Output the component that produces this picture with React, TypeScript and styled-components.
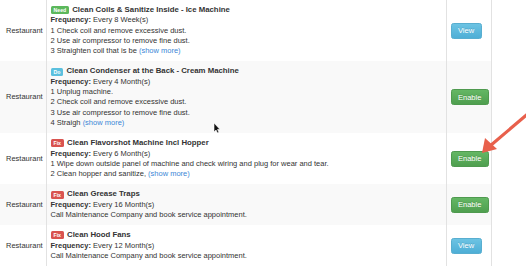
import React from "react";
import styled, { createGlobalStyle } from "styled-components";

const Global = createGlobalStyle`
  html, body { margin: 0; padding: 0; background: #fff; }
  body { font-family: "Liberation Sans", Arial, sans-serif; color: #333; overflow: hidden; }
`;

const Page = styled.div`
  position: relative;
  width: 526px;
  height: 268px;
  overflow: hidden;
`;

const Table = styled.table`
  border-collapse: collapse;
  width: 491px;
  table-layout: fixed;
  font-size: 7.5px;
  line-height: 10.3px;
`;

const Row = styled.tr<{ $alt?: boolean }>`
  background: ${(p) => (p.$alt ? "#f9f9f9" : "#fff")};
  & + & > td { border-top: 1px solid #e2e2e2; }
`;

const LocCell = styled.td`
  width: 46px;
  padding: 0 0 0 6px;
  vertical-align: middle;
  box-sizing: border-box;
`;

const MainCell = styled.td`
  width: 400px;
  box-sizing: border-box;
  padding: 5px 4px 5px 4px;
  border-left: 1px solid #e2e2e2;
  vertical-align: top;
  white-space: nowrap;
  overflow: hidden;
`;

const ActionCell = styled.td`
  width: 45px;
  box-sizing: border-box;
  padding: 0 0 0 4px;
  border-left: 1px solid #e2e2e2;
  border-right: 1px solid #e2e2e2;
  vertical-align: middle;
`;

const Title = styled.div`
  display: flex;
  align-items: center;
  gap: 3px;
  font-weight: bold;
  font-size: 7.8px;
  color: #333;
`;

const badgeColors: Record<string, string> = {
  Need: "#5cb85c",
  Do: "#5bc0de",
  Fix: "#d9534f",
};

const Badge = styled.span<{ $kind: string }>`
  display: inline-block;
  background: ${(p) => badgeColors[p.$kind]};
  color: #fff;
  font-size: 5.2px;
  font-weight: bold;
  line-height: 8px;
  height: 8px;
  padding: 0 3px;
  border-radius: 1.5px;
`;

const Line = styled.div``;

const Strong = styled.b`
  font-weight: bold;
`;

const More = styled.a`
  color: #3a87d6;
  text-decoration: none;
`;

const Button = styled.button<{ $variant: "info" | "success" }>`
  font-family: "Liberation Sans", Arial, sans-serif;
  font-size: 7.5px;
  color: #fff;
  height: 16px;
  padding: 0 6.5px;
  border-radius: 2.5px;
  border: 1px solid ${(p) => (p.$variant === "info" ? "#58aed0" : "#4f9a4f")};
  background: ${(p) =>
    p.$variant === "info"
      ? "linear-gradient(#6cc3e3, #4eaed6)"
      : "linear-gradient(#64b764, #4f9f4f)"};
  text-shadow: 0 -1px 0 rgba(0, 0, 0, 0.15);
  cursor: pointer;
`;

const Overlay = styled.svg`
  position: absolute;
  left: 0;
  top: 0;
  pointer-events: none;
`;

type Item = {
  badge: string;
  title: string;
  freq: string;
  lines: string[];
  more?: boolean;
  action: "View" | "Enable";
};

const items: Item[] = [
  {
    badge: "Need",
    title: "Clean Coils & Sanitize Inside - Ice Machine",
    freq: "Every 8 Week(s)",
    lines: [
      "1 Check coil and remove excessive dust.",
      "2 Use air compressor to remove fine dust.",
      "3 Straighten coil that is be",
    ],
    more: true,
    action: "View",
  },
  {
    badge: "Do",
    title: "Clean Condenser at the Back - Cream Machine",
    freq: "Every 4 Month(s)",
    lines: [
      "1 Unplug machine.",
      "2 Check coil and remove excessive dust.",
      "3 Use air compressor to remove fine dust.",
      "4 Straigh",
    ],
    more: true,
    action: "Enable",
  },
  {
    badge: "Fix",
    title: "Clean Flavorshot Machine Incl Hopper",
    freq: "Every 6 Month(s)",
    lines: [
      "1 Wipe down outside panel of machine and check wiring and plug for wear and tear.",
      "2 Clean hopper and sanitize,",
    ],
    more: true,
    action: "Enable",
  },
  {
    badge: "Fix",
    title: "Clean Grease Traps",
    freq: "Every 16 Month(s)",
    lines: ["Call Maintenance Company and book service appointment."],
    action: "Enable",
  },
  {
    badge: "Fix",
    title: "Clean Hood Fans",
    freq: "Every 12 Month(s)",
    lines: ["Call Maintenance Company and book service appointment."],
    action: "View",
  },
];

export default function App() {
  return (
    <Page>
      <Global />
      <Table>
        <tbody>
          {items.map((it, i) => (
            <Row key={i} $alt={i % 2 === 1}>
              <LocCell>Restaurant</LocCell>
              <MainCell>
                <Title>
                  <Badge $kind={it.badge}>{it.badge}</Badge>
                  <span>{it.title}</span>
                </Title>
                <Line>
                  <Strong>Frequency:</Strong> {it.freq}
                </Line>
                {it.lines.map((l, j) => (
                  <Line key={j}>
                    {l}
                    {it.more && j === it.lines.length - 1 ? (
                      <>
                        {" "}
                        <More>(show more)</More>
                      </>
                    ) : null}
                  </Line>
                ))}
              </MainCell>
              <ActionCell>
                <Button $variant={it.action === "View" ? "info" : "success"}>
                  {it.action}
                </Button>
              </ActionCell>
            </Row>
          ))}
        </tbody>
      </Table>
      <Overlay width="526" height="268" viewBox="0 0 526 268">
        <line x1="530" y1="112" x2="490" y2="146" stroke="#e8604c" strokeWidth="3.2" strokeLinecap="round" />
        <polygon points="482,153 485,138 497,149" fill="#e8604c" />
        <path
          d="M214 123 L214 132 L216 130 L217.5 133 L219 132.3 L217.5 129.5 L220 129.5 Z"
          fill="#111"
          stroke="#fff"
          strokeWidth="0.6"
        />
      </Overlay>
    </Page>
  );
}
